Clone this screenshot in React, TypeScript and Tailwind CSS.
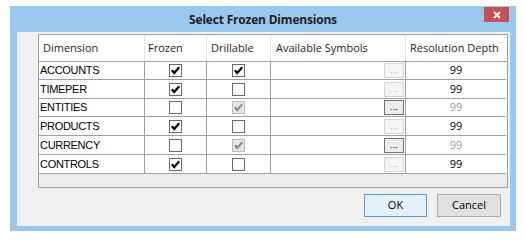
import React from "react";

type Row = {
  name: string;
  frozen: boolean;
  drill: "on" | "off" | "dis";
  active: boolean;
  h: string;
};

const rows: Row[] = [
  { name: "ACCOUNTS", frozen: true, drill: "on", active: false, h: "h-[18px]" },
  { name: "TIMEPER", frozen: true, drill: "off", active: false, h: "h-[19px]" },
  { name: "ENTITIES", frozen: false, drill: "dis", active: true, h: "h-[18px]" },
  { name: "PRODUCTS", frozen: true, drill: "off", active: false, h: "h-[19px]" },
  { name: "CURRENCY", frozen: false, drill: "dis", active: true, h: "h-[19px]" },
  { name: "CONTROLS", frozen: true, drill: "off", active: false, h: "h-[19px]" },
];

const Check = ({ checked, disabled }: { checked: boolean; disabled?: boolean }) => (
  <svg width="13" height="13" viewBox="0 0 13 13">
    <rect
      x="0.5"
      y="0.5"
      width="12"
      height="12"
      fill={disabled ? "#e6e6e6" : "#ffffff"}
      stroke={disabled ? "#bcbcbc" : "#6a6a6a"}
    />
    {checked && (
      <path
        d="M2.8 6.3 L5.2 9 L10.2 3.2"
        fill="none"
        stroke={disabled ? "#8f8f8f" : "#000000"}
        strokeWidth="2.2"
      />
    )}
  </svg>
);

const cell = "border-r border-b border-[#a0a0a0] flex items-center";

export default function App() {
  return (
    <div className="w-[526px] h-[248px] bg-white overflow-hidden">
      <div className="ml-[10px] pt-[6px]">
        <div className="w-[506px] h-[225px] bg-[#99c9ef] flex flex-col">
          {/* Title bar */}
          <div className="h-[26px] relative flex items-center justify-center">
            <span className="font-['Segoe_UI','Open_Sans',sans-serif] font-bold text-[12px] tracking-[-0.2px] text-[#1e1e1e] pt-[2px]">
              Select Frozen Dimensions
            </span>
            <div className="absolute right-[7px] top-[1px] w-[25px] h-[15px] bg-[#c75050] flex items-center justify-center">
              <svg width="8" height="8" viewBox="0 0 8 8">
                <path d="M1 1 L7 7 M7 1 L1 7" stroke="#ffffff" strokeWidth="1.8" />
              </svg>
            </div>
          </div>

          {/* Client area */}
          <div className="ml-[7px] mr-[6px] mb-[5px] flex-1 bg-[#f0f0f0] flex flex-col">
            <div className="ml-[21px] mt-[2px] w-[470px] h-[154px] border border-[#a0a0a0] bg-[#ebebeb] flex flex-col">
              {/* Header */}
              <div className="grid grid-cols-[106px_62px_64px_135px_100px] h-[27px] bg-white border-b border-[#a0a0a0] font-['Segoe_UI','Open_Sans',sans-serif] text-[11px] text-[#1e1e1e]">
                <div className="border-r border-[#e5e5e5] flex items-center pl-[4px]">Dimension</div>
                <div className="border-r border-[#e5e5e5] flex items-center pl-[3px]">Frozen</div>
                <div className="border-r border-[#e5e5e5] flex items-center pl-[4px]">Drillable</div>
                <div className="border-r border-[#e5e5e5] flex items-center pl-[5px]">Available Symbols</div>
                <div className="flex items-center pl-[4px]">Resolution Depth</div>
              </div>

              {/* Rows */}
              {rows.map((r) => (
                <div
                  key={r.name}
                  className={`grid grid-cols-[106px_62px_64px_135px_100px] ${r.h} bg-white font-['Liberation_Sans',Arial,sans-serif] text-[11px] text-black`}
                >
                  <div className={`${cell} pl-[1px] tracking-[-0.3px]`}>{r.name}</div>
                  <div className={`${cell} justify-center`}>
                    <Check checked={r.frozen} />
                  </div>
                  <div className={`${cell} justify-center`}>
                    <Check checked={r.drill !== "off"} disabled={r.drill === "dis"} />
                  </div>
                  <div className={`${cell} justify-end pr-[1px]`}>
                    <div
                      className={`w-[20px] h-[15px] border flex items-end justify-center pb-[2px] text-[9px] leading-none ${
                        r.active
                          ? "border-[#707070] bg-[#ececec] text-black"
                          : "border-[#d5d5d5] bg-[#f4f4f4] text-[#b0b0b0]"
                      }`}
                    >
                      ...
                    </div>
                  </div>
                  <div
                    className={`border-b border-[#a0a0a0] flex items-center justify-center font-['Segoe_UI','Open_Sans',sans-serif] ${
                      r.active ? "text-[#9a9a9a]" : "text-black"
                    }`}
                  >
                    99
                  </div>
                </div>
              ))}
            </div>

            {/* Buttons */}
            <div className="flex justify-end gap-[10px] mt-[6px] mr-[9px] font-['Segoe_UI','Open_Sans',sans-serif] text-[11px] text-black">
              <button className="w-[63px] h-[23px] border border-[#5a9bd5] bg-[#e5f1fb] flex items-center justify-center">
                OK
              </button>
              <button className="w-[64px] h-[23px] border border-[#adadad] bg-[#e1e1e1] flex items-center justify-center">
                Cancel
              </button>
            </div>
          </div>
        </div>
      </div>
    </div>
  );
}
